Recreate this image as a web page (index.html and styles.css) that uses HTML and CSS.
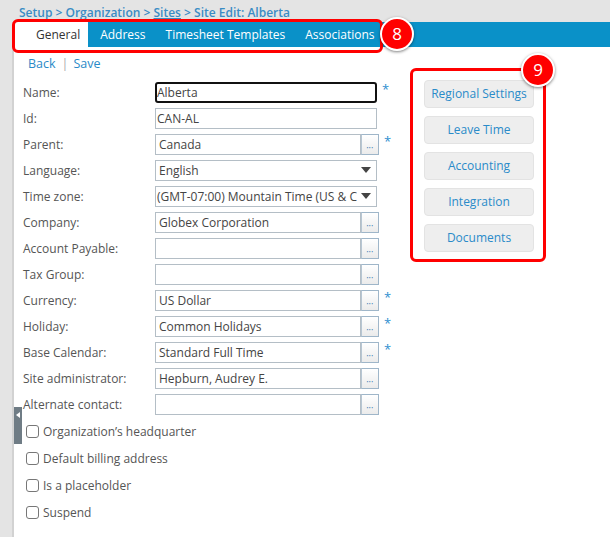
FILE: index.html
```html
<!DOCTYPE html>
<html>
<head>
<meta charset="utf-8">
<link rel="stylesheet" href="styles.css">
</head>
<body>
<div class="crumb">Setup &gt; Organization &gt; <u>Sites</u> &gt; Site Edit: Alberta</div>
<div class="panel">
  <div class="tabs">
    <div class="tab active">General</div>
    <div class="tab second">Address</div>
    <div class="tab">Timesheet Templates</div>
    <div class="tab">Associations</div>
  </div>
  <div class="content">
    <div class="form-col">
      <div class="links"><span>Back</span><span class="sep">|</span><span>Save</span></div>
      <div class="rows">
        <div class="row"><span class="lbl">Name:</span><div class="input focus">Alberta</div><span class="req">*</span></div>
        <div class="row"><span class="lbl">Id:</span><div class="input plain">CAN-AL</div></div>
        <div class="row"><span class="lbl">Parent:</span><div class="lookup"><div class="input">Canada</div><div class="dots"><span>•••</span></div></div><span class="req">*</span></div>
        <div class="row"><span class="lbl">Language:</span><div class="input select"><span class="val">English</span><span class="arrow"></span></div></div>
        <div class="row"><span class="lbl">Time zone:</span><div class="input select tz"><span class="val">(GMT-07:00) Mountain Time (US &amp; C</span><span class="arrow"></span></div></div>
        <div class="row"><span class="lbl">Company:</span><div class="lookup"><div class="input">Globex Corporation</div><div class="dots"><span>•••</span></div></div></div>
        <div class="row"><span class="lbl">Account Payable:</span><div class="lookup"><div class="input"></div><div class="dots"><span>•••</span></div></div></div>
        <div class="row"><span class="lbl">Tax Group:</span><div class="lookup"><div class="input"></div><div class="dots"><span>•••</span></div></div></div>
        <div class="row"><span class="lbl">Currency:</span><div class="lookup"><div class="input">US Dollar</div><div class="dots"><span>•••</span></div></div><span class="req">*</span></div>
        <div class="row"><span class="lbl">Holiday:</span><div class="lookup"><div class="input">Common Holidays</div><div class="dots"><span>•••</span></div></div><span class="req">*</span></div>
        <div class="row"><span class="lbl">Base Calendar:</span><div class="lookup"><div class="input">Standard Full Time</div><div class="dots"><span>•••</span></div></div><span class="req">*</span></div>
        <div class="row"><span class="lbl">Site administrator:</span><div class="lookup"><div class="input">Hepburn, Audrey E.</div><div class="dots"><span>•••</span></div></div></div>
        <div class="row"><span class="lbl">Alternate contact:</span><div class="lookup"><div class="input"></div><div class="dots"><span>•••</span></div></div></div>
      </div>
      <div class="checks">
        <div class="check"><span class="cb"></span><span>Organization’s headquarter</span></div>
        <div class="check"><span class="cb"></span><span>Default billing address</span></div>
        <div class="check"><span class="cb"></span><span>Is a placeholder</span></div>
        <div class="check"><span class="cb"></span><span>Suspend</span></div>
      </div>
    </div>
    <div class="side-col">
      <div class="btn-group">
        <div class="sbtn">Regional Settings</div>
        <div class="sbtn">Leave Time</div>
        <div class="sbtn">Accounting</div>
        <div class="sbtn">Integration</div>
        <div class="sbtn">Documents</div>
      </div>
    </div>
  </div>
  <div class="collapse"><span class="tri"></span></div>
</div>
<div class="anno-box8"></div>
<div class="badge b8">8</div>
<div class="badge b9">9</div>
</body>
</html>
```
FILE: styles.css
```css
html, body {
  margin: 0;
  padding: 0;
}
body {
  background: #e4e4e4;
  font-family: "Open Sans", "DejaVu Sans", sans-serif;
  font-size: 12px;
  color: #555;
  height: 537px;
  overflow: hidden;
}
.crumb {
  height: 22px;
  line-height: 25px;
  padding-left: 19px;
  color: #3a8cc4;
  font-size: 12px;
  font-weight: 600;
  white-space: nowrap;
}
.crumb u {
  text-decoration: underline;
}
.panel {
  margin-left: 12px;
  border-left: 2px solid #d2d2d2;
  background: #fff;
  height: 515px;
  position: relative;
}
.tabs {
  display: flex;
  background: #0a91c8;
  height: 25px;
}
.tab {
  color: #fff;
  line-height: 25px;
  padding: 0 10px;
  white-space: nowrap;
  font-size: 12px;
}
.tab.active {
  background: #fff;
  color: #333;
  padding: 0 8px 0 22px;
}
.tab.second {
  padding-left: 12px;
}
.content {
  display: flex;
  padding-left: 9px;
}
.form-col {
  width: 387px;
}
.links {
  padding-top: 7px;
  height: 19px;
  line-height: 19px;
  color: #2a8ac8;
  margin-left: 5px;
  font-size: 12.5px;
}
.sep {
  color: #aaa;
  margin: 0 5px 0 6px;
}
.rows {
  margin-top: 6px;
}
.row {
  display: flex;
  align-items: center;
  height: 26px;
}
.lbl {
  width: 132px;
  color: #555;
  white-space: nowrap;
}
.input {
  width: 222px;
  height: 21px;
  box-sizing: border-box;
  border: 1px solid #b4bec6;
  padding: 0 3px;
  line-height: 19px;
  color: #444;
  overflow: hidden;
  white-space: nowrap;
}
.input.plain {
  padding-left: 1px;
}
.input.focus {
  border: 2px solid #111;
  border-radius: 3px;
  padding-left: 0;
  line-height: 17px;
}
.lookup {
  display: flex;
  width: 224px;
}
.lookup .input {
  width: 206px;
}
.dots {
  width: 18px;
  height: 21px;
  box-sizing: border-box;
  border: 1px solid #9fb6c9;
  border-left: 1px solid #b7c6d3;
  background: linear-gradient(#ffffff, #ebebeb);
  display: flex;
  align-items: flex-end;
  justify-content: center;
  padding-bottom: 3px;
}
.dots span {
  font-size: 5px;
  line-height: 5px;
  color: #4a84b8;
  letter-spacing: 0.5px;
}
.select {
  display: flex;
  align-items: center;
  justify-content: space-between;
  padding-right: 5px;
}
.select .val {
  overflow: hidden;
  white-space: nowrap;
  flex: 1;
}
.select.tz {
  padding-left: 1px;
}
.arrow {
  width: 0;
  height: 0;
  border-left: 5px solid transparent;
  border-right: 5px solid transparent;
  border-top: 6px solid #444;
  margin-left: 4px;
  flex: none;
}
.req {
  color: #2f8fd0;
  margin-left: 5px;
  font-size: 13px;
  align-self: flex-start;
  margin-top: 1px;
}
.checks {
  margin-top: 0.5px;
}
.check {
  display: flex;
  align-items: center;
  height: 27px;
  padding-left: 3px;
  gap: 4px;
  color: #555;
}
.cb {
  width: 13px;
  height: 13px;
  box-sizing: border-box;
  border: 1px solid #777;
  border-radius: 3px;
  background: #fff;
}
.side-col {
  padding-top: 21px;
}
.btn-group {
  border: 3px solid #f00;
  border-radius: 6px;
  padding: 9px 9px 7px 11px;
  display: flex;
  flex-direction: column;
  gap: 8px;
}
.sbtn {
  width: 110px;
  height: 28px;
  box-sizing: border-box;
  background: #eeeeee;
  border: 1px solid #e3e3e3;
  border-radius: 4px;
  color: #2a8bc9;
  text-align: center;
  line-height: 26px;
  white-space: nowrap;
}
.collapse {
  position: absolute;
  left: 0;
  top: 385px;
  width: 8px;
  height: 37px;
  background: #6f7c85;
}
.tri {
  position: absolute;
  left: 2px;
  top: 5px;
  width: 0;
  height: 0;
  border-top: 3px solid transparent;
  border-bottom: 3px solid transparent;
  border-right: 4px solid #fff;
}
.anno-box8 {
  position: absolute;
  left: 12px;
  top: 19px;
  width: 371px;
  height: 34px;
  box-sizing: border-box;
  border: 3px solid #f00;
  border-radius: 6px;
}
.badge {
  position: absolute;
  width: 30px;
  height: 30px;
  border-radius: 50%;
  background: #f00;
  border: 2px solid #fff;
  box-shadow: 0 1px 3px rgba(0, 0, 0, 0.5);
  color: #fff;
  font-size: 17px;
  text-align: center;
  line-height: 30px;
}
.b8 {
  left: 380px;
  top: 17px;
}
.b9 {
  left: 521px;
  top: 53px;
}
```
